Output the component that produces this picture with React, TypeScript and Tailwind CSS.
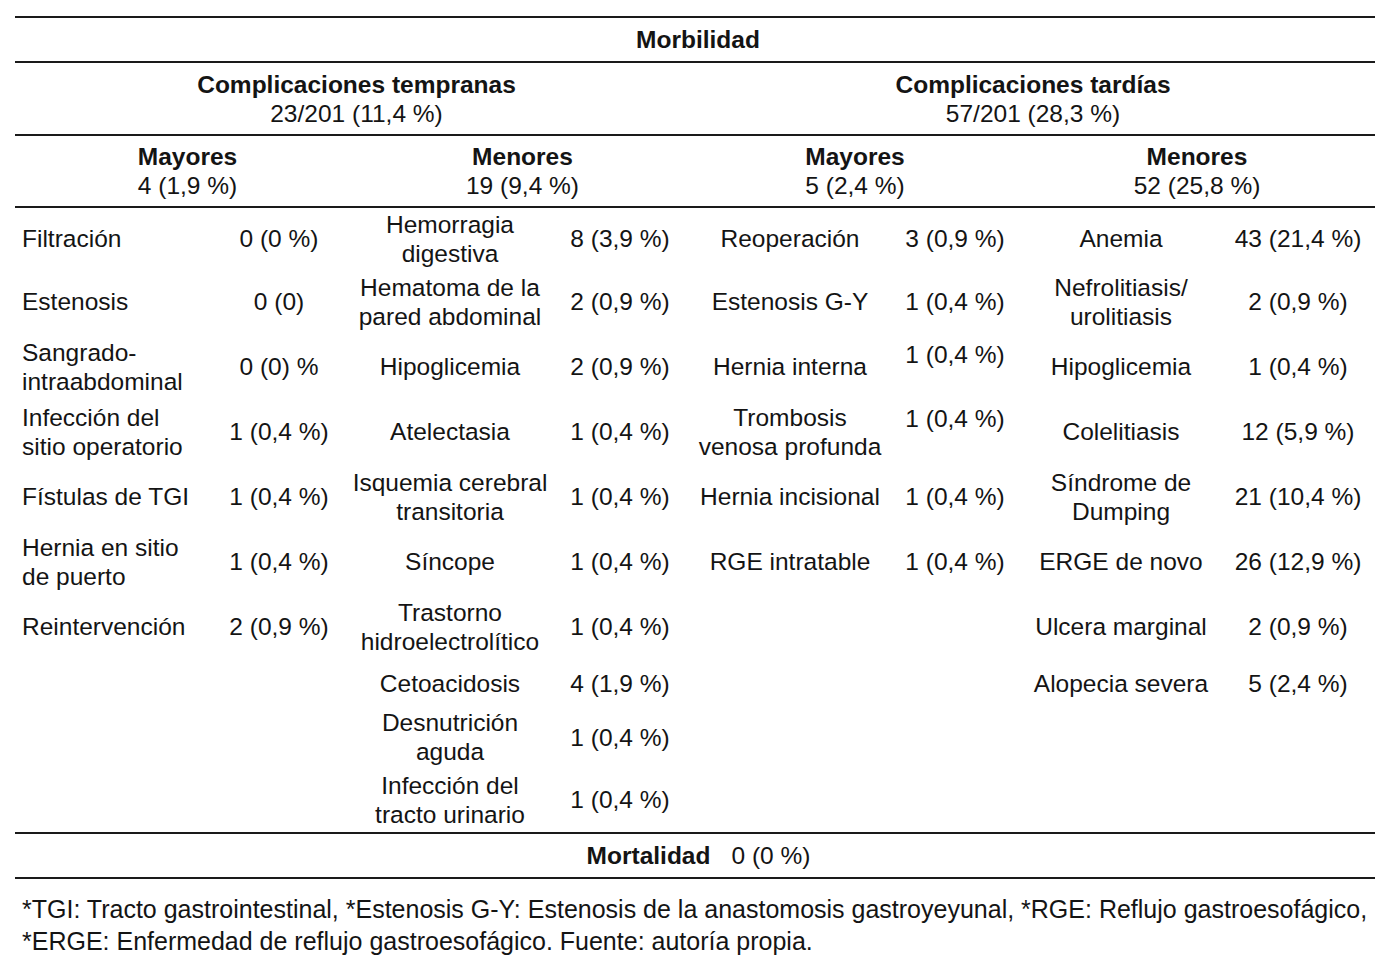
import React from "react";

type Cell = { t?: React.ReactNode; cls?: string };

const cols = "grid grid-cols-[200px_128px_214px_126px_214px_116px_216px_138px]";

const rows: { h: string; cells: Cell[] }[] = [
  {
    h: "h-[61px]",
    cells: [
      { t: "Filtración" },
      { t: "0 (0 %)" },
      { t: <>Hemorragia<br />digestiva</> },
      { t: "8 (3,9 %)" },
      { t: "Reoperación" },
      { t: "3 (0,9 %)" },
      { t: "Anemia" },
      { t: "43 (21,4 %)" },
    ],
  },
  {
    h: "h-[65px]",
    cells: [
      { t: "Estenosis" },
      { t: "0 (0)" },
      { t: <>Hematoma de la<br />pared abdominal</> },
      { t: "2 (0,9 %)" },
      { t: "Estenosis G-Y" },
      { t: "1 (0,4 %)" },
      { t: <>Nefrolitiasis/<br />urolitiasis</> },
      { t: "2 (0,9 %)" },
    ],
  },
  {
    h: "h-[65px]",
    cells: [
      { t: <>Sangrado-<br />intraabdominal</> },
      { t: "0 (0) %" },
      { t: "Hipoglicemia" },
      { t: "2 (0,9 %)" },
      { t: "Hernia interna" },
      { t: "1 (0,4 %)", cls: "self-start pt-[6px]" },
      { t: "Hipoglicemia" },
      { t: "1 (0,4 %)" },
    ],
  },
  {
    h: "h-[65px]",
    cells: [
      { t: <>Infección del<br />sitio operatorio</> },
      { t: "1 (0,4 %)" },
      { t: "Atelectasia" },
      { t: "1 (0,4 %)" },
      { t: <>Trombosis<br />venosa profunda</> },
      { t: "1 (0,4 %)", cls: "self-start pt-[5px]" },
      { t: "Colelitiasis" },
      { t: "12 (5,9 %)" },
    ],
  },
  {
    h: "h-[65px]",
    cells: [
      { t: "Fístulas de TGI" },
      { t: "1 (0,4 %)" },
      { t: <>Isquemia cerebral<br />transitoria</> },
      { t: "1 (0,4 %)" },
      { t: "Hernia incisional" },
      { t: "1 (0,4 %)" },
      { t: <>Síndrome de<br />Dumping</> },
      { t: "21 (10,4 %)" },
    ],
  },
  {
    h: "h-[65px]",
    cells: [
      { t: <>Hernia en sitio<br />de puerto</> },
      { t: "1 (0,4 %)" },
      { t: "Síncope" },
      { t: "1 (0,4 %)" },
      { t: "RGE intratable" },
      { t: "1 (0,4 %)" },
      { t: "ERGE de novo" },
      { t: "26 (12,9 %)" },
    ],
  },
  {
    h: "h-[65px]",
    cells: [
      { t: "Reintervención" },
      { t: "2 (0,9 %)" },
      { t: <>Trastorno<br />hidroelectrolítico</> },
      { t: "1 (0,4 %)" },
      {},
      {},
      { t: "Ulcera marginal" },
      { t: "2 (0,9 %)" },
    ],
  },
  {
    h: "h-[48px]",
    cells: [
      {},
      {},
      { t: "Cetoacidosis" },
      { t: "4 (1,9 %)" },
      {},
      {},
      { t: "Alopecia severa" },
      { t: "5 (2,4 %)" },
    ],
  },
  {
    h: "h-[60px]",
    cells: [
      {},
      {},
      { t: <>Desnutrición<br />aguda</> },
      { t: "1 (0,4 %)" },
      {},
      {},
      {},
      {},
    ],
  },
  {
    h: "h-[65px]",
    cells: [
      {},
      {},
      { t: <>Infección del<br />tracto urinario</> },
      { t: "1 (0,4 %)" },
      {},
      {},
      {},
      {},
    ],
  },
];

export default function App() {
  return (
    <div className="min-h-[977px] w-[1400px] bg-white pt-[16px] pl-[15px] font-['Liberation_Sans',Arial,sans-serif] text-[#141414]">
      <div className="w-[1360px]">
        <div className="border-t-2 border-[#1a1a1a]" />
        <div className="flex h-[43px] items-center justify-center pl-[6px] text-[24.5px] font-bold leading-[29px]">
          Morbilidad
        </div>
        <div className="border-t-2 border-[#1a1a1a]" />
        <div className="flex h-[71px] items-center text-[24.5px] leading-[29px]">
          <div className="w-[683px] text-center">
            <div className="font-bold">Complicaciones tempranas</div>
            <div>23/201 (11,4 %)</div>
          </div>
          <div className="w-[670px] text-center">
            <div className="font-bold">Complicaciones tardías</div>
            <div>57/201 (28,3 %)</div>
          </div>
        </div>
        <div className="border-t-2 border-[#1a1a1a]" />
        <div className="flex h-[70px] items-center text-[24.5px] leading-[29px]">
          <div className="w-[345px] text-center">
            <div className="font-bold">Mayores</div>
            <div>4 (1,9 %)</div>
          </div>
          <div className="w-[325px] text-center">
            <div className="font-bold">Menores</div>
            <div>19 (9,4 %)</div>
          </div>
          <div className="w-[340px] text-center">
            <div className="font-bold">Mayores</div>
            <div>5 (2,4 %)</div>
          </div>
          <div className="w-[344px] text-center">
            <div className="font-bold">Menores</div>
            <div>52 (25,8 %)</div>
          </div>
        </div>
        <div className="border-t-2 border-[#1a1a1a]" />
        <div className="text-[24.5px] leading-[29px]">
          {rows.map((r, i) => (
            <div key={i} className={`${cols} ${r.h} items-center`}>
              {r.cells.map((c, j) => (
                <div
                  key={j}
                  className={`whitespace-nowrap ${j === 0 ? "pl-[7px] text-left" : "text-center"} ${c.cls ?? ""}`}
                >
                  {c.t}
                </div>
              ))}
            </div>
          ))}
        </div>
        <div className="border-t-2 border-[#1a1a1a]" />
        <div className="flex h-[43px] items-center justify-center gap-[21px] pl-[7px] text-[24.5px] leading-[29px]">
          <span className="font-bold">Mortalidad</span>
          <span>0 (0 %)</span>
        </div>
        <div className="border-t-2 border-[#1a1a1a]" />
        <div className="whitespace-nowrap pt-[14px] pl-[7px] text-[25px] leading-[32px]">
          *TGI: Tracto gastrointestinal, *Estenosis G-Y: Estenosis de la anastomosis gastroyeyunal, *RGE: Reflujo gastroesofágico,
          <br />
          *ERGE: Enfermedad de reflujo gastroesofágico. Fuente: autoría propia.
        </div>
      </div>
    </div>
  );
}
